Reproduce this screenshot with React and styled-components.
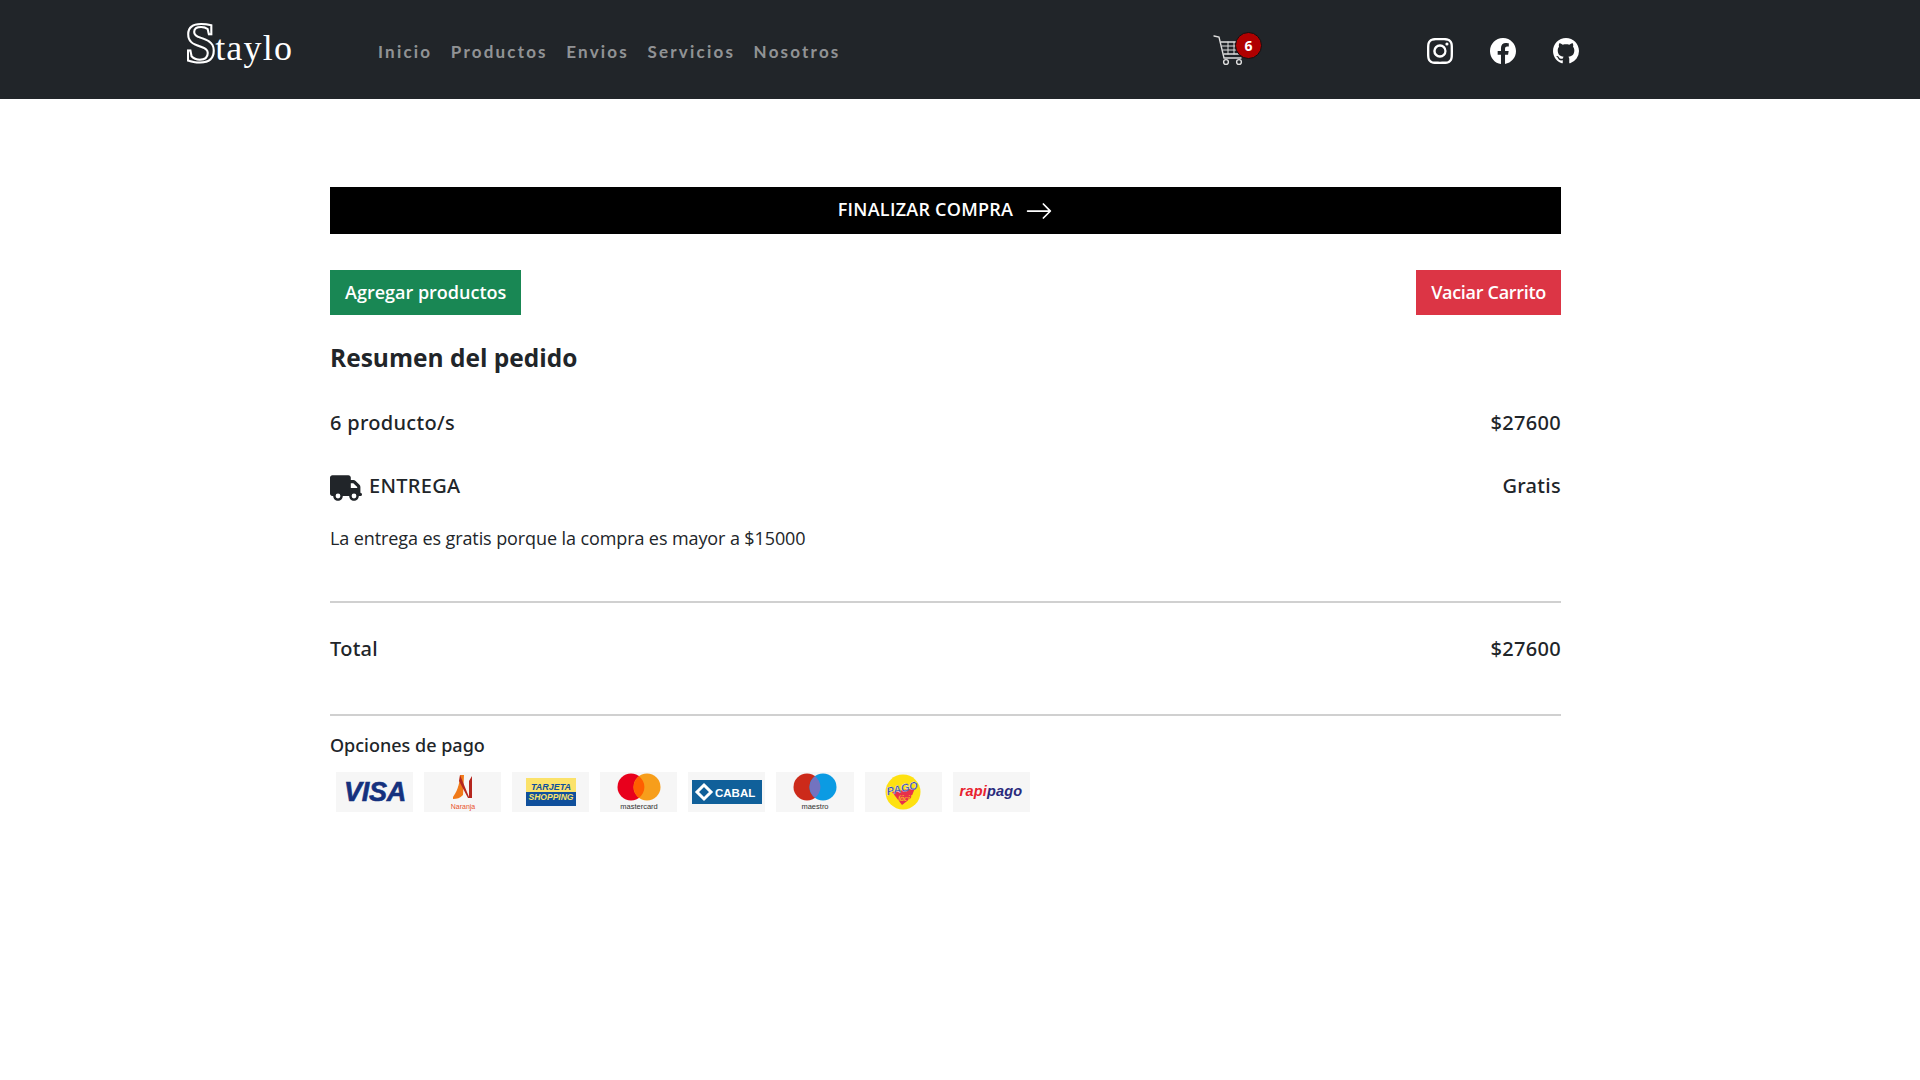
import React from "react";
import styled, { createGlobalStyle } from "styled-components";
import { BsInstagram, BsFacebook, BsGithub, BsArrowRight } from "react-icons/bs";
import { FaTruck } from "react-icons/fa6";

const Global = createGlobalStyle`
  html, body { margin: 0; padding: 0; background: #fff; }
  body { font-family: "Open Sans", "Noto Sans", sans-serif; color: #212529; }
`;

const Header = styled.header`
  height: 99px;
  background: #212529;
  display: flex;
  align-items: center;
  padding-left: 185px;
`;
const Logo = styled.div`
  width: 108px;
  height: 56px;
  margin-right: 85px;
  display: flex;
  align-items: baseline;
  font-family: "Liberation Serif", serif;
  color: #fff;
  line-height: 1;
  margin-top: -14px;
`;
const LogoBig = styled.span`
  font-size: 56px;
  font-weight: 700;
  color: #212529;
  -webkit-text-stroke: 2px #fff;
  margin-right: -1px;
`;
const LogoSmall = styled.span`
  font-size: 36px;
  letter-spacing: 1.2px;
  position: relative;
  top: -2px;
`;
const Nav = styled.nav`
  display: flex;
  gap: 18.5px;
  width: 835px;
  font-family: Lato, sans-serif;
  font-size: 17px;
  font-weight: 700;
  letter-spacing: 2.2px;
  color: rgba(255, 255, 255, 0.52);
  margin-top: 4px;
`;
const NavLink = styled.a``;
const CartWrap = styled.div`
  position: relative;
  width: 32px;
  height: 34px;
  margin-right: 182px;
  margin-top: 1px;
  color: #ddd;
`;
const Badge = styled.span`
  position: absolute;
  left: 22px;
  top: -1px;
  width: 27px;
  height: 27px;
  border-radius: 50%;
  background: #b00000;
  border: 1px solid #111;
  box-sizing: border-box;
  color: #fff;
  font-size: 14px;
  font-weight: 700;
  display: flex;
  align-items: center;
  justify-content: center;
`;
const Socials = styled.div`
  display: flex;
  gap: 37px;
  color: #fff;
  font-size: 26px;
  margin-top: 3px;
  svg { display: block; }
`;
const Main = styled.main`
  width: 1231px;
  margin-left: 330px;
  padding-top: 88px;
`;
const Checkout = styled.button`
  width: 100%;
  height: 47px;
  background: #000;
  color: #fff;
  border: 0;
  font: 600 18px "Open Sans", sans-serif;
  letter-spacing: 0.25px;
  display: flex;
  align-items: center;
  justify-content: center;
  gap: 12px;
  padding: 0;
  span { position: relative; top: -2px; }
`;
const ActionRow = styled.div`
  display: flex;
  justify-content: space-between;
  margin-top: 36px;
`;
const ActionButton = styled.button`
  height: 45px;
  padding: 0 15px 1px;
  border: 0;
  color: #fff;
  background: ${(p) => p.$bg};
  font: 600 18px "Open Sans", sans-serif;
  letter-spacing: ${(p) => p.$track}px;
`;
const Title = styled.h2`
  margin: 23px 0 0;
  font-size: 24.5px;
  line-height: 40px;
  font-weight: 700;
  color: #212529;
`;
const Row = styled.div`
  display: flex;
  justify-content: space-between;
  align-items: center;
  margin-top: ${(p) => p.$top}px;
  font-family: "Noto Sans", "Open Sans", sans-serif;
  font-size: 20px;
  line-height: 28px;
  font-weight: 500;
  letter-spacing: 0.3px;
`;
const Label = styled.span`
  display: flex;
  align-items: center;
  gap: 7px;
  svg { position: relative; top: 2px; }
`;
const Note = styled.p`
  margin: 24px 0 0;
  font-size: 18px;
  line-height: 24px;
  letter-spacing: -0.1px;
`;
const Rule = styled.hr`
  margin: ${(p) => p.$top}px 0 0;
  border: 0;
  border-top: 2px solid #d0d0d0;
`;
const PayTitle = styled.h6`
  margin: 18px 0 0;
  font-family: "Noto Sans", "Open Sans", sans-serif;
  font-size: 18px;
  line-height: 22px;
  font-weight: 500;
`;
const PayRow = styled.div`
  display: flex;
  gap: 11px;
  margin: 16px 0 0 6px;
`;
const PayCard = styled.div`
  width: 77.1px;
  height: 40px;
  background: #f6f6f6;
  display: flex;
  align-items: center;
  justify-content: center;
  svg { display: block; }
`;

const Cart = () => (
  <svg width="32" height="34" viewBox="0 0 32 34" fill="none" stroke="currentColor" strokeWidth="1.4" strokeLinecap="round">
    <path d="M1 3l5 1 5 21h17" />
    <path d="M8 9h21l-2 12H11" />
    <path d="M9 13h19M10 17h17M15 9v12M21 9v12" strokeWidth="1" />
    <circle cx="13" cy="29" r="2.4" />
    <circle cx="26" cy="29" r="2.4" />
  </svg>
);

const Visa = () => (
  <svg width="70" height="32" viewBox="0 0 70 32">
    <text x="35" y="25" textAnchor="middle" fontFamily="Liberation Sans, sans-serif" fontWeight="700" fontStyle="italic" fontSize="27" fill="#15317e" stroke="#15317e" strokeWidth="0.6" letterSpacing="-0.3">VISA</text>
  </svg>
);
const Naranja = () => (
  <svg width="34" height="38" viewBox="0 0 34 38">
    <path d="M7 24C10 20 14 12 14 2h4l-1 20c-3 3-6 4-10 4z" fill="#f07a1a" />
    <path d="M14 2l9 22V8l3-5v22h-4L13 8z" fill="#b5261e" />
    <text x="17" y="36" textAnchor="middle" fontFamily="Liberation Sans, sans-serif" fontSize="7" fill="#e8502a">Naranja</text>
  </svg>
);
const Shopping = () => (
  <svg width="50" height="28" viewBox="0 0 50 28">
    <rect width="50" height="14" fill="#fbe26a" />
    <rect y="14" width="50" height="14" fill="#10509c" />
    <text x="25" y="12" textAnchor="middle" fontFamily="Liberation Sans, sans-serif" fontWeight="700" fontStyle="italic" fontSize="9" fill="#10509c">TARJETA</text>
    <text x="25" y="22" textAnchor="middle" fontFamily="Liberation Sans, sans-serif" fontWeight="700" fontStyle="italic" fontSize="8.5" fill="#fbe26a">SHOPPING</text>
  </svg>
);
const Master = () => (
  <svg width="50" height="38" viewBox="0 0 50 38">
    <circle cx="17" cy="14" r="13.5" fill="#e8001c" />
    <circle cx="33" cy="14" r="13.5" fill="#f79e1b" />
    <path d="M25 3.2a13.5 13.5 0 0 1 0 21.6a13.5 13.5 0 0 1 0-21.6z" fill="#ff5f00" />
    <text x="25" y="36" textAnchor="middle" fontFamily="Liberation Sans, sans-serif" fontSize="7.5" fill="#333">mastercard</text>
  </svg>
);
const Cabal = () => (
  <svg width="70" height="24" viewBox="0 0 70 24">
    <rect width="70" height="24" fill="#10609a" />
    <path d="M12 5l7 7-7 7-7-7z" fill="none" stroke="#fff" strokeWidth="3" />
    <text x="23" y="17" fontFamily="Liberation Sans, sans-serif" fontWeight="700" fontSize="11.5" fill="#fff">CABAL</text>
  </svg>
);
const Maestro = () => (
  <svg width="50" height="38" viewBox="0 0 50 38">
    <circle cx="17" cy="14" r="13.5" fill="#cc2a1a" />
    <circle cx="33" cy="14" r="13.5" fill="#0b9be3" />
    <path d="M25 3.2a13.5 13.5 0 0 1 0 21.6a13.5 13.5 0 0 1 0-21.6z" fill="#7373c0" />
    <text x="25" y="36" textAnchor="middle" fontFamily="Liberation Sans, sans-serif" fontSize="7.5" fill="#333">maestro</text>
  </svg>
);
const PagoFacil = () => (
  <svg width="36" height="36" viewBox="0 0 36 36">
    <circle cx="18" cy="18" r="17.5" fill="#fee111" />
    <path d="M7 18l23-4-4 10-9 7z" fill="#e8304a" />
    <text x="18" y="18" textAnchor="middle" fontFamily="Liberation Sans, sans-serif" fontWeight="700" fontStyle="italic" fontSize="11" fill="#2b3fa8" stroke="#fff" strokeWidth="0.3" transform="rotate(-12 18 18)">PAGO</text>
    <text x="20" y="27" textAnchor="middle" fontFamily="Liberation Serif, serif" fontStyle="italic" fontSize="8" fill="#fee111">fácil</text>
  </svg>
);
const RapiPago = () => (
  <svg width="70" height="18" viewBox="0 0 70 18">
    <text x="35" y="13" textAnchor="middle" fontFamily="Liberation Sans, sans-serif" fontWeight="700" fontStyle="italic" fontSize="14.5" letterSpacing="0.2">
      <tspan fill="#e8222e">rapi</tspan>
      <tspan fill="#2a2a7c">pago</tspan>
    </text>
  </svg>
);

const cards = [Visa, Naranja, Shopping, Master, Cabal, Maestro, PagoFacil, RapiPago];
const links = ["Inicio", "Productos", "Envios", "Servicios", "Nosotros"];

export default function App() {
  return (
    <>
      <Global />
      <Header>
        <Logo>
          <LogoBig>S</LogoBig>
          <LogoSmall>taylo</LogoSmall>
        </Logo>
        <Nav>
          {links.map((l) => (
            <NavLink key={l}>{l}</NavLink>
          ))}
        </Nav>
        <CartWrap>
          <Cart />
          <Badge>6</Badge>
        </CartWrap>
        <Socials>
          <BsInstagram />
          <BsFacebook />
          <BsGithub />
        </Socials>
      </Header>
      <Main>
        <Checkout>
          <span>FINALIZAR COMPRA</span> <BsArrowRight size={28} />
        </Checkout>
        <ActionRow>
          <ActionButton $bg="#198754" $track={0}>Agregar productos</ActionButton>
          <ActionButton $bg="#dc3545" $track={-0.3}>Vaciar Carrito</ActionButton>
        </ActionRow>
        <Title>Resumen del pedido</Title>
        <Row $top={31}>
          <span>6 producto/s</span>
          <span>$27600</span>
        </Row>
        <Row $top={33}>
          <Label>
            <FaTruck size={32} />
            ENTREGA
          </Label>
          <span>Gratis</span>
        </Row>
        <Note>La entrega es gratis porque la compra es mayor a $15000</Note>
        <Rule $top={51} />
        <Row $top={32}>
          <span>Total</span>
          <span>$27600</span>
        </Row>
        <Rule $top={51} />
        <PayTitle>Opciones de pago</PayTitle>
        <PayRow>
          {cards.map((C, i) => (
            <PayCard key={i}>
              <C />
            </PayCard>
          ))}
        </PayRow>
      </Main>
    </>
  );
}
